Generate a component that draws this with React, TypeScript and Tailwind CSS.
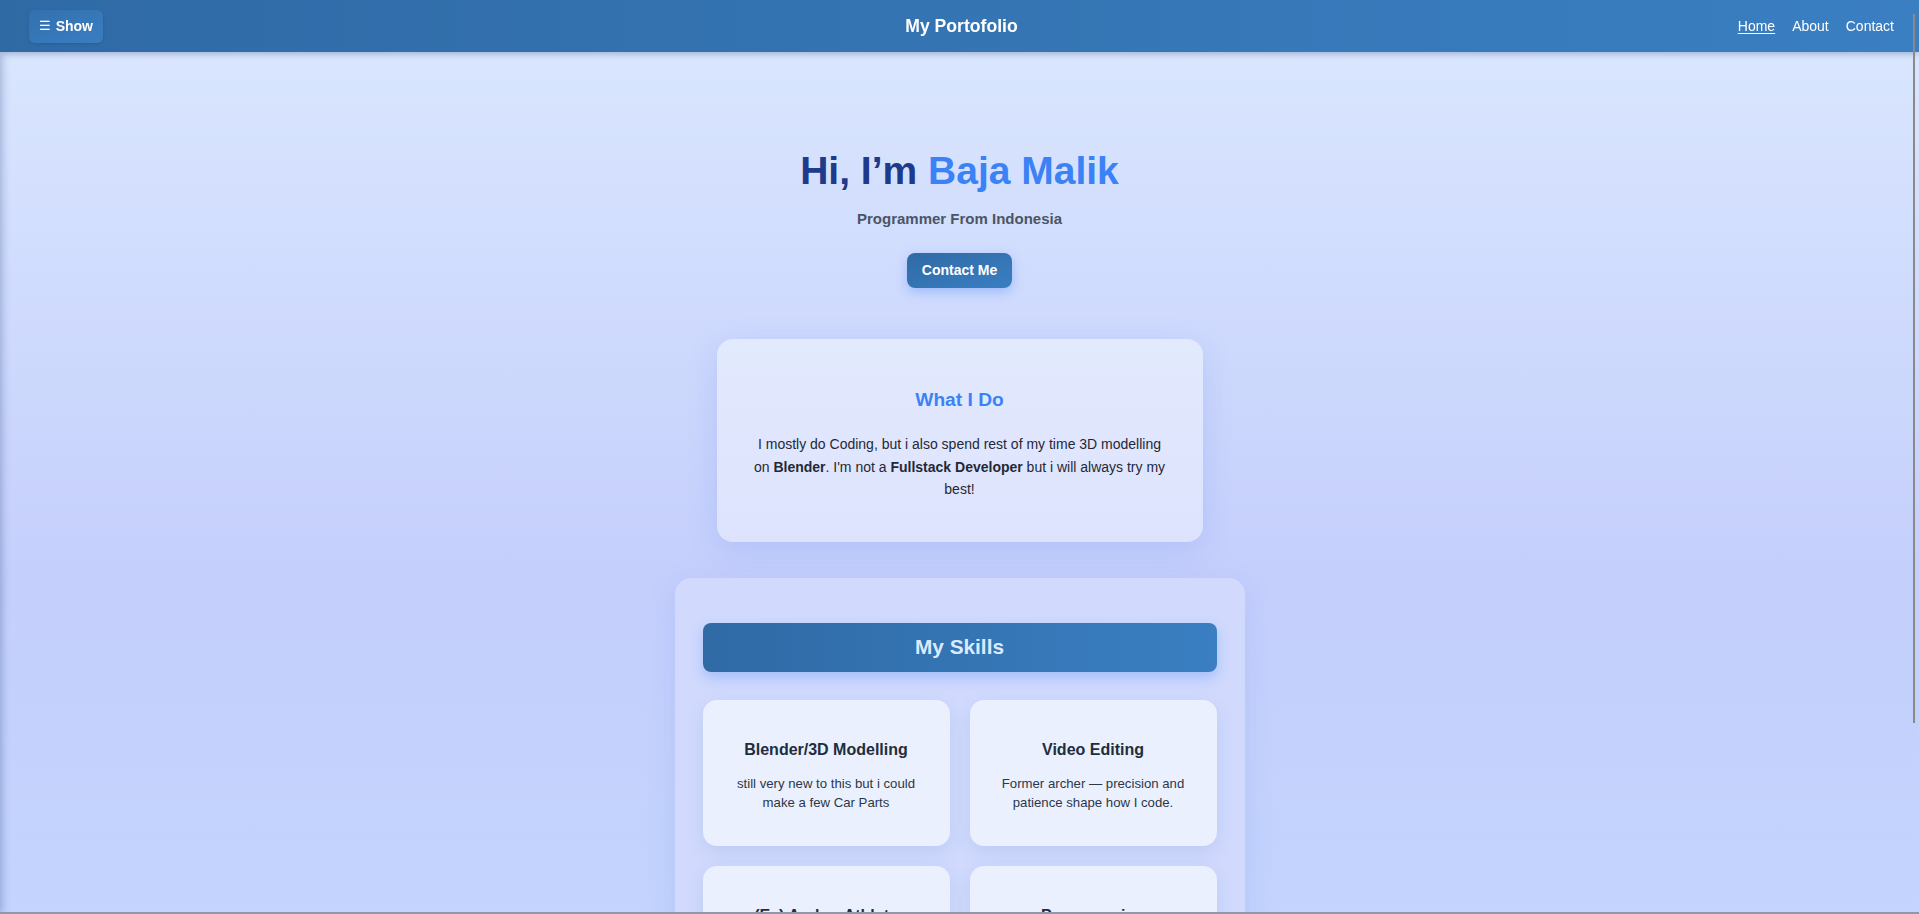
import { useState } from 'react'

interface Skill {
  title: string
  desc: string
}

const skills: Skill[] = [
  { title: 'Blender/3D Modelling', desc: 'still very new to this but i could make a few Car Parts' },
  { title: 'Video Editing', desc: 'Former archer — precision and patience shape how I code.' },
  { title: '(Ex) Archer Athlete', desc: 'Former archer — precision and patience shape how I code.' },
  { title: 'Programming', desc: 'Mostly web stuff, learning something new every day.' },
]

function Navbar({ onToggle }: { onToggle: () => void }) {
  return (
    <header className="sticky top-0 z-20 h-[52px] grid grid-cols-3 items-center pl-[29px] pr-[25px] bg-linear-to-r from-[#2f6aa5] to-[#3a7fc2] shadow-[0_2px_6px_rgba(15,40,90,0.28)]">
      <div>
        <button
          onClick={onToggle}
          className="h-[33px] px-[10px] rounded-[6px] flex items-center gap-[5px] text-[14px] font-bold text-white bg-linear-to-br from-[#3271b0] to-[#3a7dc0] shadow-[0_1px_3px_rgba(0,0,0,0.12)]"
        >
          <span className="font-['DejaVu_Sans',sans-serif] text-[13px] font-normal">☰</span>
          Show
        </button>
      </div>
      <div className="text-center text-[17.6px] font-bold text-white">My Portofolio</div>
      <nav className="flex justify-end gap-[17px] text-[14px] text-white">
        <a className="underline underline-offset-2">Home</a>
        <a>About</a>
        <a>Contact</a>
      </nav>
    </header>
  )
}

function SkillCard({ title, desc }: Skill) {
  return (
    <div className="h-[146px] rounded-[14px] bg-[#eaf0fe] pt-[40px] px-[22px] text-center shadow-[0_6px_18px_rgba(70,110,200,0.14)]">
      <h3 className="text-[16px] leading-[19px] font-bold text-[#1f2d40]">{title}</h3>
      <p className="mt-[15px] text-[13.2px] leading-[19px] text-[#2d3748]">{desc}</p>
    </div>
  )
}

export default function App() {
  const [open, setOpen] = useState(false)

  return (
    <div className="h-screen overflow-y-auto [scrollbar-width:none] font-['Liberation_Sans',Arial,sans-serif]">
      <div className="min-h-[1150px] bg-linear-to-b from-[#dbe8fe] via-[#c5cffc] to-[#c2d7fe]">
        <Navbar onToggle={() => setOpen(!open)} />

        <aside
          className={`fixed top-[52px] bottom-0 left-0 z-10 w-[250px] bg-[#2f6aa5] shadow-[2px_0_8px_rgba(30,60,130,0.3)] transition-transform ${
            open ? 'translate-x-0' : '-translate-x-full'
          }`}
        />

        <main className="flex flex-col items-center pt-[95px] pb-[100px]">
          <h1 className="text-[39px] leading-[47px] font-bold text-[#1e3a8a]">
            Hi, I’m <span className="text-[#3b82f6]">Baja Malik</span>
          </h1>
          <p className="mt-[16px] text-[15px] leading-[18px] font-bold text-[#4b5563]">Programmer From Indonesia</p>
          <button className="mt-[25px] h-[35px] px-[15px] rounded-[8px] text-[14px] font-bold text-white bg-linear-to-br from-[#2f6aa5] to-[#3a7fc2] shadow-[0_4px_12px_rgba(59,130,246,0.35)]">
            Contact Me
          </button>

          <section className="mt-[51px] w-[486px] rounded-[16px] px-[36px] pt-[49px] pb-[41px] text-center bg-linear-to-b from-[#e2eafd] to-[#dee3fd] shadow-[0_8px_30px_rgba(80,120,230,0.18)]">
            <h3 className="text-[19.2px] leading-[24px] font-bold text-[#3b82f6]">What I Do</h3>
            <p className="mt-[21px] text-[14px] leading-[22.5px] text-[#1f2937]">
              I mostly do Coding, but i also spend rest of my time 3D modelling on <b>Blender</b>. I'm not a{' '}
              <b>Fullstack Developer</b> but i will always try my best!
            </p>
          </section>

          <section className="mt-[36px] w-[570px] rounded-[16px] px-[28px] pt-[45px] pb-[28px] bg-[#d1dafd] shadow-[0_8px_30px_rgba(80,120,230,0.15)]">
            <div className="h-[49px] rounded-[8px] flex items-center justify-center bg-linear-to-r from-[#2f6aa5] to-[#3a7fc2] shadow-[0_6px_14px_rgba(59,130,246,0.3)]">
              <h2 className="text-[20.8px] font-bold text-[#dbeafe]">My Skills</h2>
            </div>
            <div className="mt-[28px] grid grid-cols-2 gap-[20px]">
              {skills.map((s) => (
                <SkillCard key={s.title} {...s} />
              ))}
            </div>
          </section>
        </main>
      </div>

      <div className="fixed top-[14px] right-[4px] z-30 w-[2px] h-[709px] bg-[#8a8a8a]" />
      <div className="fixed bottom-0 left-0 right-0 z-30 h-[2px] bg-[#8e97ab]" />
    </div>
  )
}
